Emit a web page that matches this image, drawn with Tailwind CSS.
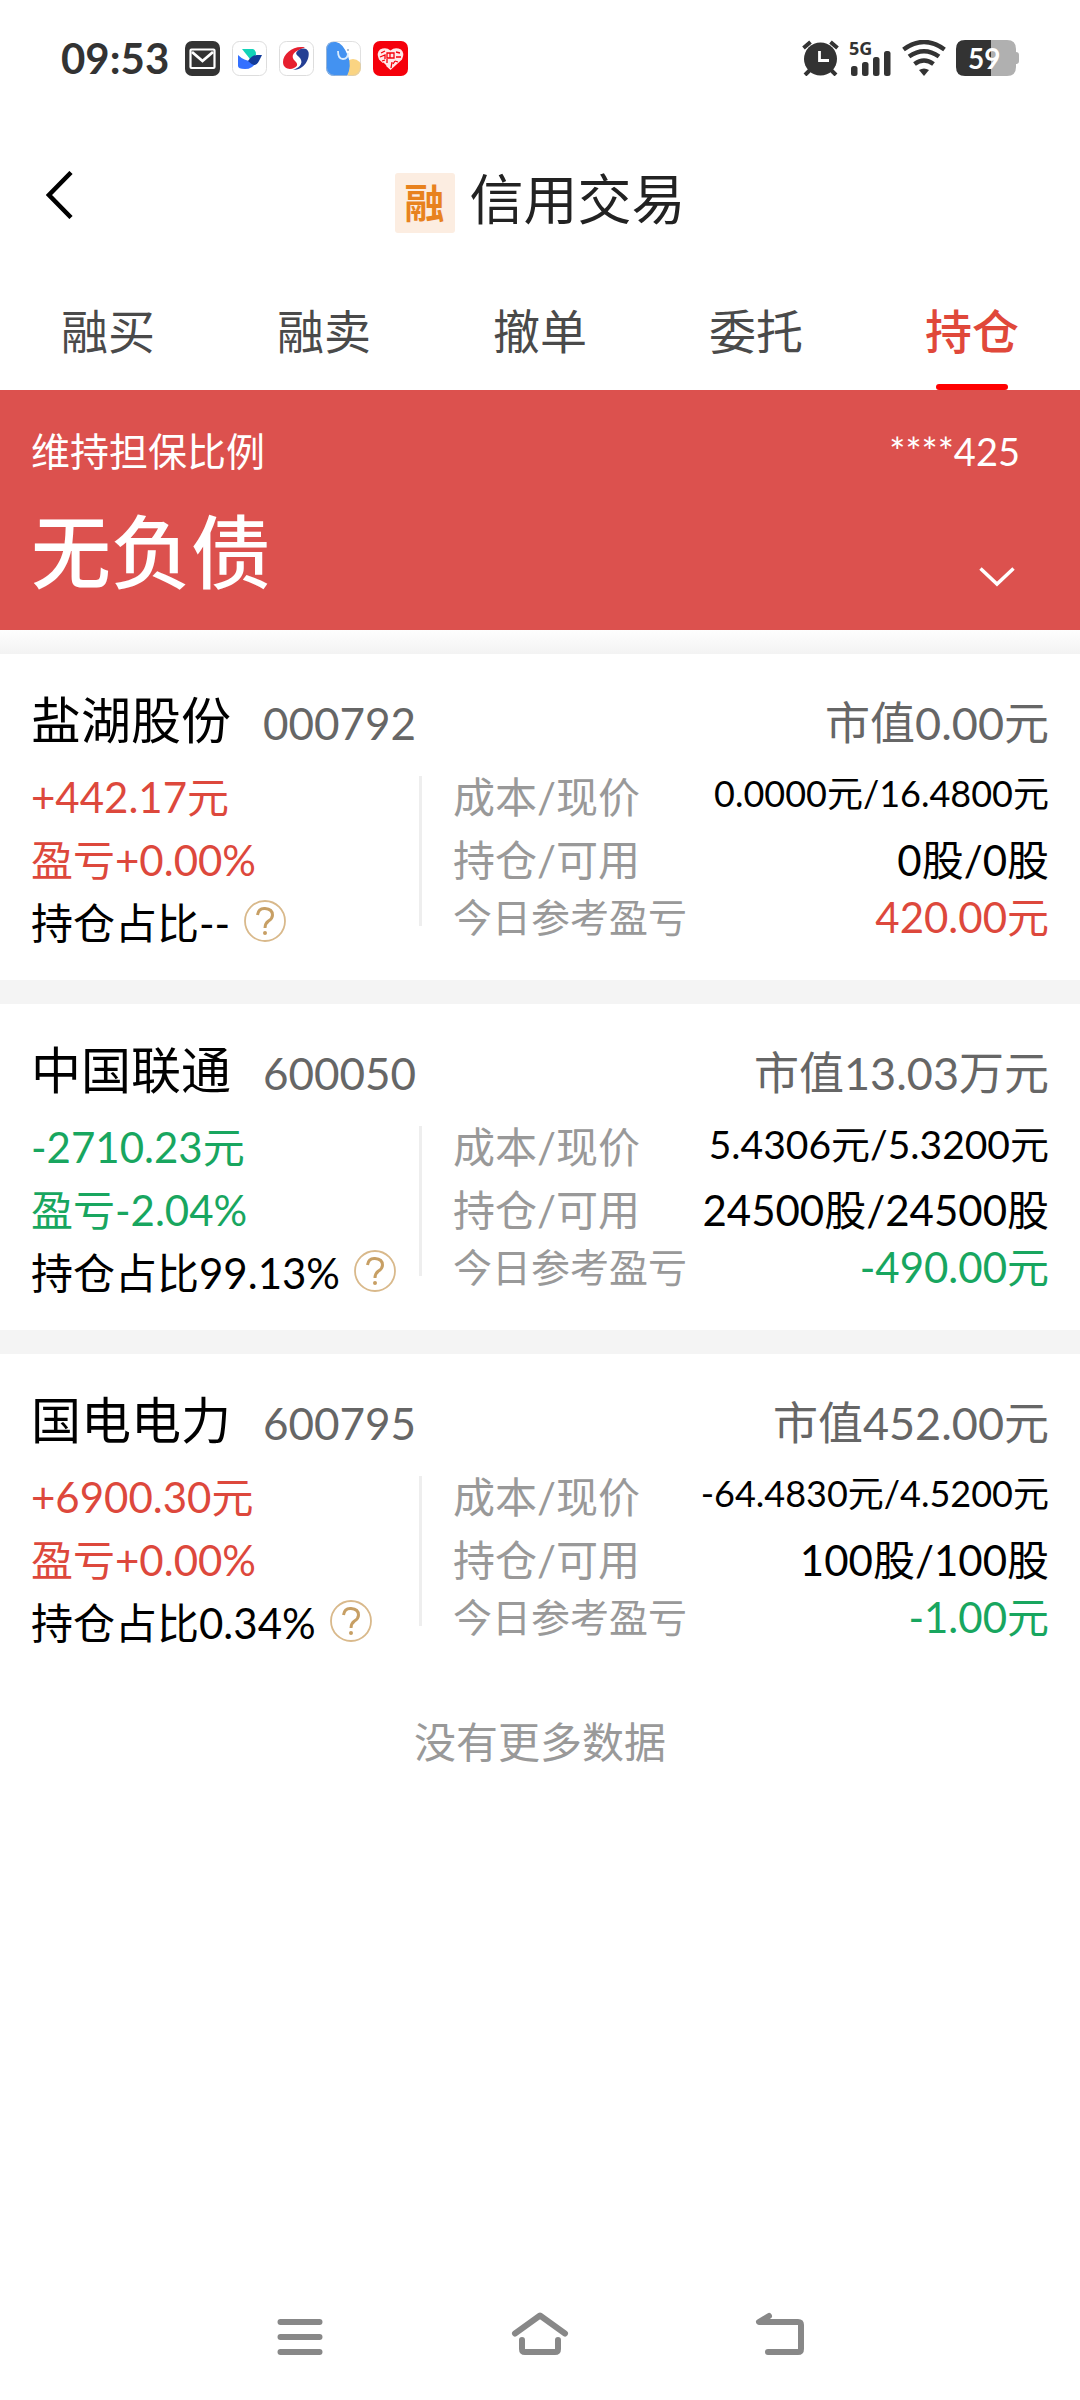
<!DOCTYPE html>
<html lang="zh-CN">
<head>
<meta charset="utf-8">
<meta name="viewport" content="width=device-width, initial-scale=1">
<title>信用交易</title>
<script src="https://cdn.jsdelivr.net/npm/@tailwindcss/browser@4"></script>
</head>
<body class="flex min-h-screen flex-col bg-white font-[Lato,'Noto_Sans_CJK_SC',sans-serif] text-black">

<!-- Status bar -->
<div class="flex h-[116px] items-center justify-between px-[61px]">
  <div class="flex items-center gap-3">
    <span class="mr-1 text-[42px] leading-[44px] font-bold text-[#333]">09:53</span>
    <svg class="size-[35px]" viewBox="0 0 35 35"><rect width="35" height="35" rx="7" fill="#333"/><rect x="5.500" y="8.500" width="24" height="18.500" rx="1" fill="none" stroke="#fff" stroke-width="2.200"/><path d="M8 11h19l-9.500 8z" fill="#333"/><path d="M7 11l10.500 9L28 11" fill="none" stroke="#fff" stroke-width="2.800"/></svg>
    <svg class="size-[35px]" viewBox="0 0 35 35"><rect x=".5" y=".5" width="34" height="34" rx="7" fill="#fff" stroke="#ddd"/><path d="M10 8h11q3 1 3 6l-6 4z" fill="#12d3b8"/><path d="M6 14q6 6 14 6l5-1q-3 9-12 9-7 0-7-3z" fill="#3370ff"/><path d="M16 20q4-6 9-6h5l-3 6q-2 4-5 4-3-1-6-4z" fill="#133c9a"/></svg>
    <svg class="size-[35px]" viewBox="0 0 35 35"><rect x=".5" y=".5" width="34" height="34" rx="7" fill="#fff" stroke="#ddd"/><path d="M26 6.500C15 4 4 13 4 21c0 7 7 8 11 6 4-2 4-4 1-7-5-5-2-10 10-13.500z" fill="#e61f2f"/><path d="M14 29c11 0 17-11 15.500-18C28 6 22 7 19 9.500c-3 2.500-2 4 1 6.500 5 5 2 10-6 13z" fill="#243f94"/></svg>
    <svg class="size-[35px]" viewBox="0 0 35 35"><defs><clipPath id="appClip"><rect width="35" height="35" rx="8"/></clipPath></defs><g clip-path="url(#appClip)"><rect width="35" height="35" fill="#fff"/><circle cx="27" cy="27" r="9" fill="#fad482"/><path d="M0 35V6Q2 0 10 1q7 1 12 14 4 10-1 20z" fill="#4392f1"/><path d="M12 10c0 5 2 8 5 8s5-2 5-6" fill="none" stroke="#d9ecff" stroke-width="1.800"/><circle cx="22" cy="9" r="1" fill="#98aabf"/></g><rect x=".5" y=".5" width="34" height="34" rx="8" fill="none" stroke="#ccc" stroke-opacity=".6"/></svg>
    <svg class="size-[35px]" viewBox="0 0 35 35"><rect width="35" height="35" rx="7" fill="#f5000b"/><path d="M17.500 29L6 18.500Q3 12 7 8.500q6-3 10.500 1Q22 5.500 28 8.500q4 3.500 1 10z" fill="#ffe9e9"/><path d="M8 12l4-2m-5 6l5-2v4m11-7l4 1m-4 4h5m-6 4l3 1m-11-3v4m-4 0l3 3m6-4l-1 6m4-7l-2 3M14 12h7v5h-7zm3 0v5M9 20l3-1" fill="none" stroke="#f5000b" stroke-width="1.300"/></svg>
  </div>
  <div class="flex items-center gap-[10px]">
    <svg class="h-9 w-[37px]" viewBox="0 0 37 36"><g fill="none" stroke="#333" stroke-width="4"><path d="M1.500 8l7-6M35.500 8l-7-6M8 30l-5 5M29 30l5 5"/></g><circle cx="18.500" cy="19" r="16.500" fill="#333"/><path d="M17.500 11v9.500H27" fill="none" stroke="#fff" stroke-width="2.800"/></svg>
    <div class="relative h-9 w-[43px]">
      <span class="absolute top-0 left-0 font-['Noto_Sans'] text-[18px] leading-[16px] font-bold text-[#333]">5G</span>
      <svg class="size-full" viewBox="0 0 43 36" fill="#333"><rect x="2" y="26" width="6.500" height="10" rx="2.500"/><rect x="13" y="22" width="6.500" height="14" rx="2.500"/><rect x="24" y="17" width="6.500" height="19" rx="2.500"/><rect x="35" y="11" width="6.500" height="25" rx="2.500"/></svg>
    </div>
    <svg class="h-9 w-11" viewBox="0 0 44 36"><g fill="none" stroke="#333" stroke-width="4.500"><path d="M1.500 9.500Q22-5.500 42.500 9.500"/><path d="M7 16.500q15-10.500 30 0"/><path d="M12.500 24q9.500-7 19 0"/></g><path d="M17 30q5-3 10 0l-5 6z" fill="#333"/></svg>
    <div class="relative h-9 w-[63px]">
      <svg class="size-full" viewBox="0 0 63 36"><path d="M35 0h16q9 0 9 9v3q3 0 3 3v6q0 3-3 3v3q0 9-9 9H35z" fill="#b0b0b0"/><path d="M9 0h26v36H9q-9 0-9-9V9q0-9 9-9z" fill="#333"/></svg>
      <span class="absolute inset-y-0 left-3 text-[28px] leading-9 font-bold text-white">59</span>
    </div>
  </div>
</div>

<!-- Title -->
<header class="grid h-[168px] grid-cols-[96px_1fr_96px] items-center">
  <button type="button" aria-label="返回" class="flex h-24 items-center pb-[10px] pl-[46px]">
    <svg class="h-12 w-[27px]" viewBox="0 0 27 48"><path d="M25 1.500L3 24l22 22.500" fill="none" stroke="#000" stroke-width="4.500"/></svg>
  </button>
  <div class="flex items-end justify-center gap-[15px] pt-[6px]">
    <span class="flex size-[60px] items-center justify-center rounded-[3px] bg-[#fcede1] text-[40px] leading-none font-bold text-[#e8821e]">融</span>
    <h1 class="pb-[6px] text-[54px] leading-[54px] text-[#222]">信用交易</h1>
  </div>
</header>

<!-- Tabs -->
<nav class="grid h-[106px] grid-cols-5 text-[47px] leading-[94px] text-[#4a4a4a]">
  <a href="#buy" class="text-center">融买</a>
  <a href="#sell" class="text-center">融卖</a>
  <a href="#cancel" class="text-center">撤单</a>
  <a href="#orders" class="text-center">委托</a>
  <a href="#positions" aria-current="page" class="flex flex-col items-center justify-between font-medium text-[#e0483a]">持仓<span class="h-[6px] w-[72px] rounded-full bg-[#ff0000]"></span></a>
</nav>

<!-- Collateral ratio -->
<section class="flex h-60 flex-col bg-[#dc514e] pt-[35px] pl-[31px] text-white">
  <div class="flex items-center justify-between pr-[60px] leading-[52px]">
    <h2 class="text-[39px]">维持担保比例</h2>
    <span class="text-[38px]">****425</span>
  </div>
  <div class="flex items-end justify-between pt-[26px] pr-[65px]">
    <strong class="text-[80px] leading-[96px] font-medium">无负债</strong>
    <button type="button" aria-label="展开" class="pb-3">
      <svg class="h-5 w-9" viewBox="0 0 36 20"><path d="M1.500 1.500L18 17 34.500 1.500" fill="none" stroke="#fff" stroke-width="3.500"/></svg>
    </button>
  </div>
</section>
<div class="h-6 bg-linear-to-b from-[#fefefe] to-[#f3f3f3]"></div>

<!-- Positions -->
<main class="flex-1">
  <article class="h-[326px] px-[31px] pt-8">
    <header class="flex h-20 items-start justify-between leading-[68px]">
      <div class="flex gap-8"><h3 class="text-[50px]">盐湖股份</h3><span class="pt-[3px] text-[44px] text-[#666]">000792</span></div>
      <span class="pt-[3px] text-[45px] text-[#666]">市值0.00元</span>
    </header>
    <div class="flex text-[42px]">
      <div class="w-[388px] leading-[63px]">
        <p class="text-[#dd483c]">+442.17元</p>
        <p class="text-[#dd483c]">盈亏+0.00%</p>
        <div class="flex items-center gap-[14px]">持仓占比--
          <button type="button" aria-label="说明" class="flex pb-[6px]"><svg class="size-[42px]" viewBox="0 0 42 42" fill="none" stroke="#c79f64"><circle cx="21" cy="21" r="20" stroke="#d9b98b" stroke-width="1.800"/><path d="M13.500 15q1-7 7.500-6.500 7.500.5 7.500 6.500 0 3.500-4 6-3.500 2.500-3.500 7" stroke-width="3"/><circle cx="21" cy="33" r="1" stroke-width="2"/></svg></button>
        </div>
      </div>
      <div class="mt-[10px] h-[150px] w-[3px] bg-[#eee]"></div>
      <dl class="grid flex-1 grid-cols-[auto_1fr] grid-rows-[63px_63px_50px] pl-[31px] leading-[63px]">
        <dt class="text-[#999]">成本/现价</dt><dd class="text-right text-[36px] leading-[54px]">0.0000元/16.4800元</dd>
        <dt class="text-[#999]">持仓/可用</dt><dd class="text-right">0股/0股</dd>
        <dt class="text-[39px] leading-[50px] text-[#999]">今日参考盈亏</dt><dd class="text-right leading-[50px] text-[#dd483c]">420.00元</dd>
      </dl>
    </div>
  </article>
  <div class="h-6 bg-[#f4f4f4]"></div>

  <article class="h-[326px] px-[31px] pt-8">
    <header class="flex h-20 items-start justify-between leading-[68px]">
      <div class="flex gap-8"><h3 class="text-[50px]">中国联通</h3><span class="pt-[3px] text-[44px] text-[#666]">600050</span></div>
      <span class="pt-[3px] text-[45px] text-[#666]">市值13.03万元</span>
    </header>
    <div class="flex text-[42px]">
      <div class="w-[388px] leading-[63px]">
        <p class="text-[#18a65f]">-2710.23元</p>
        <p class="text-[#18a65f]">盈亏-2.04%</p>
        <div class="flex items-center gap-[14px]">持仓占比99.13%
          <button type="button" aria-label="说明" class="flex pb-[6px]"><svg class="size-[42px]" viewBox="0 0 42 42" fill="none" stroke="#c79f64"><circle cx="21" cy="21" r="20" stroke="#d9b98b" stroke-width="1.800"/><path d="M13.500 15q1-7 7.500-6.500 7.500.5 7.500 6.500 0 3.500-4 6-3.500 2.500-3.500 7" stroke-width="3"/><circle cx="21" cy="33" r="1" stroke-width="2"/></svg></button>
        </div>
      </div>
      <div class="mt-[10px] h-[150px] w-[3px] bg-[#eee]"></div>
      <dl class="grid flex-1 grid-cols-[auto_1fr] grid-rows-[63px_63px_50px] pl-[31px] leading-[63px]">
        <dt class="text-[#999]">成本/现价</dt><dd class="text-right text-[39px] leading-[56px]">5.4306元/5.3200元</dd>
        <dt class="text-[#999]">持仓/可用</dt><dd class="text-right">24500股/24500股</dd>
        <dt class="text-[39px] leading-[50px] text-[#999]">今日参考盈亏</dt><dd class="text-right leading-[50px] text-[#18a65f]">-490.00元</dd>
      </dl>
    </div>
  </article>
  <div class="h-6 bg-[#f4f4f4]"></div>

  <article class="h-[326px] px-[31px] pt-8">
    <header class="flex h-20 items-start justify-between leading-[68px]">
      <div class="flex gap-8"><h3 class="text-[50px]">国电电力</h3><span class="pt-[3px] text-[44px] text-[#666]">600795</span></div>
      <span class="pt-[3px] text-[45px] text-[#666]">市值452.00元</span>
    </header>
    <div class="flex text-[42px]">
      <div class="w-[388px] leading-[63px]">
        <p class="text-[#dd483c]">+6900.30元</p>
        <p class="text-[#dd483c]">盈亏+0.00%</p>
        <div class="flex items-center gap-[14px]">持仓占比0.34%
          <button type="button" aria-label="说明" class="flex pb-[6px]"><svg class="size-[42px]" viewBox="0 0 42 42" fill="none" stroke="#c79f64"><circle cx="21" cy="21" r="20" stroke="#d9b98b" stroke-width="1.800"/><path d="M13.500 15q1-7 7.500-6.500 7.500.5 7.500 6.500 0 3.500-4 6-3.500 2.500-3.500 7" stroke-width="3"/><circle cx="21" cy="33" r="1" stroke-width="2"/></svg></button>
        </div>
      </div>
      <div class="mt-[10px] h-[150px] w-[3px] bg-[#eee]"></div>
      <dl class="grid flex-1 grid-cols-[auto_1fr] grid-rows-[63px_63px_50px] pl-[31px] leading-[63px]">
        <dt class="text-[#999]">成本/现价</dt><dd class="text-right text-[36px] leading-[54px]">-64.4830元/4.5200元</dd>
        <dt class="text-[#999]">持仓/可用</dt><dd class="text-right">100股/100股</dd>
        <dt class="text-[39px] leading-[50px] text-[#999]">今日参考盈亏</dt><dd class="text-right leading-[50px] text-[#18a65f]">-1.00元</dd>
      </dl>
    </div>
  </article>
  <p class="pt-8 text-center text-[42px] leading-[60px] text-[#999]">没有更多数据</p>
</main>

<!-- System navigation -->
<nav class="mx-auto grid h-32 w-2/3 grid-cols-3 place-items-center pb-1">
  <button type="button" aria-label="最近任务"><svg class="h-12 w-[60px]" viewBox="0 0 60 48"><path d="M10.500 12h39M10.500 27h39M10.500 42h39" stroke="#888" stroke-width="6" stroke-linecap="round"/></svg></button>
  <button type="button" aria-label="主屏幕"><svg class="h-12 w-[60px]" viewBox="0 0 60 48" fill="none" stroke="#888" stroke-width="6" stroke-linecap="round" stroke-linejoin="round"><path d="M5 23.500L30 5.500 55 23.500M12 30v9q0 3 3 3h30q3 0 3-3v-9"/></svg></button>
  <button type="button" aria-label="返回上一级"><svg class="h-12 w-[60px]" viewBox="0 0 60 48" fill="none" stroke="#888" stroke-width="6" stroke-linecap="round" stroke-linejoin="round"><path d="M19 6L9 12h39q3 0 3 3v24q0 3-3 3H18"/></svg></button>
</nav>
</body>
</html>
